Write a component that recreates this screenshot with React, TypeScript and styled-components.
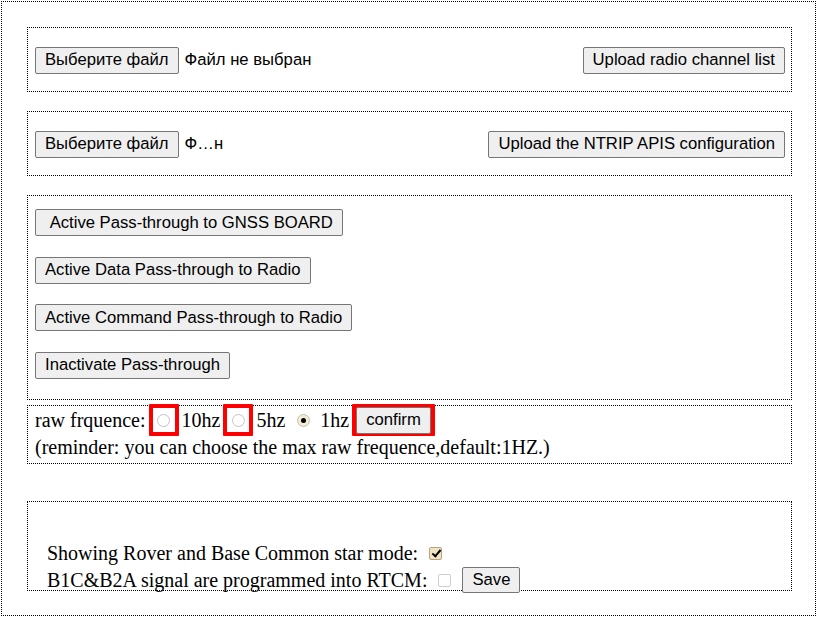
import styled, { createGlobalStyle } from "styled-components";

const GlobalStyle = createGlobalStyle`
    body {
        margin: 0;
        background: #fff;
        color: #000;
        font-family: "Liberation Serif", "Times New Roman", serif;
        font-size: 20px;
    }
`

function App() {
    return (
        <>
            <GlobalStyle />
            <Page>
                <UploadBox>
                    <FilePicker>
                        <Button type="button">Выберите файл</Button>
                        <FileName>Файл не выбран</FileName>
                    </FilePicker>
                    <Button type="button">Upload radio channel list</Button>
                </UploadBox>

                <UploadBox>
                    <FilePicker>
                        <Button type="button">Выберите файл</Button>
                        <FileName>Ф…н</FileName>
                    </FilePicker>
                    <Button type="button">Upload the NTRIP APIS configuration</Button>
                </UploadBox>

                <PassBox>
                    <Button type="button">{"\u00a0Active Pass-through to GNSS BOARD"}</Button>
                    <Button type="button">Active Data Pass-through to Radio</Button>
                    <Button type="button">Active Command Pass-through to Radio</Button>
                    <Button type="button">Inactivate Pass-through</Button>
                </PassBox>

                <RawBox>
                    <RawLine>
                        <span>raw frquence:</span>
                        <Marked>
                            <Radio />
                        </Marked>
                        <span>10hz</span>
                        <Marked>
                            <Radio />
                        </Marked>
                        <span>5hz</span>
                        <Radio $checked />
                        <span>1hz</span>
                        <Marked $tight>
                            <Button type="button">confirm</Button>
                        </Marked>
                    </RawLine>
                    <TextLine>(reminder: you can choose the max raw frequence,default:1HZ.)</TextLine>
                </RawBox>

                <OptionBox>
                    <OptionLine>
                        Showing Rover and Base Common star mode: <Check $checked />
                    </OptionLine>
                    <OptionLine>
                        B1C&amp;B2A signal are programmed into RTCM: <Check /> <Button type="button">Save</Button>
                    </OptionLine>
                </OptionBox>
            </Page>
        </>
    )
}

export default App;

const Page = styled.div`
    margin: 1px;
    border: 1px dotted #000;
    padding: 25px 23px 24px 25px;
`

const Section = styled.div`
    border: 1px dotted #000;
`

const UploadBox = styled(Section)`
    display: flex;
    align-items: center;
    justify-content: space-between;
    height: 63px;
    padding: 1px 6px 0 7px;
    box-sizing: content-box;
    height: 62px;
    margin-bottom: 19px;
`

const FilePicker = styled.div`
    display: flex;
    align-items: center;
    gap: 6px;
`

const FileName = styled.span`
    font-family: "Liberation Sans", Arial, sans-serif;
    font-size: 16.67px;
`

const Button = styled.button`
    height: 27px;
    padding: 0 9px;
    box-sizing: border-box;
    font-family: "Liberation Sans", Arial, sans-serif;
    font-size: 16.67px;
    color: #000;
    background: #efefef;
    border: 1px solid #767676;
    border-radius: 2px;
    white-space: nowrap;
`

const PassBox = styled(Section)`
    display: flex;
    flex-direction: column;
    align-items: flex-start;
    gap: 20.5px;
    padding: 13px 7px 20px;
`

const RawBox = styled(Section)`
    margin-top: 5px;
    padding: 0 7px;
    height: 57px;
`

const RawLine = styled.div`
    display: flex;
    align-items: center;
    height: 29px;
    gap: 4px;
`

const TextLine = styled.div`
    line-height: 24px;
    white-space: nowrap;
`

const Marked = styled.span<{ $tight?: boolean }>`
    display: inline-flex;
    align-items: center;
    justify-content: center;
    box-sizing: border-box;
    height: 32px;
    min-width: 30px;
    padding: 0;
    border: 4px solid #ff0000;
    border-radius: 1px;
    margin: 0 -1px;
`

const Radio = styled.span<{ $checked?: boolean }>`
    display: inline-block;
    position: relative;
    width: 13px;
    height: 13px;
    box-sizing: border-box;
    border-radius: 50%;
    border: 1px solid ${(p) => (p.$checked ? "#c9bfa8" : "#c4c4c4")};
    background: ${(p) => (p.$checked ? "#f3ecd9" : "#fff")};
    margin: ${(p) => (p.$checked ? "0 6px 0 8px" : "0")};

    &::after {
        content: "";
        display: ${(p) => (p.$checked ? "block" : "none")};
        position: absolute;
        left: 3px;
        top: 3px;
        width: 5px;
        height: 5px;
        border-radius: 50%;
        background: #000;
    }
`

const OptionBox = styled(Section)`
    margin-top: 37px;
    height: 90px;
    box-sizing: border-box;
    padding: 38px 19px 0;
`

const OptionLine = styled.div`
    display: flex;
    align-items: center;
    height: 27px;
    white-space: pre;

    & > button {
        margin-left: 8px;
        height: 26px;
    }
`

const Check = styled.span<{ $checked?: boolean }>`
    display: inline-block;
    position: relative;
    width: 13px;
    height: 13px;
    box-sizing: border-box;
    margin: 0 3px 0 6px;
    border-radius: 2px;
    border: 1px solid ${(p) => (p.$checked ? "#b8a37a" : "#cfcfcf")};
    background: ${(p) => (p.$checked ? "#f1e3c3" : "#fff")};

    &::after {
        content: "";
        display: ${(p) => (p.$checked ? "block" : "none")};
        position: absolute;
        left: 3.5px;
        top: 0.5px;
        width: 3px;
        height: 7px;
        border: solid #000;
        border-width: 0 2px 2px 0;
        transform: rotate(40deg);
    }
`
